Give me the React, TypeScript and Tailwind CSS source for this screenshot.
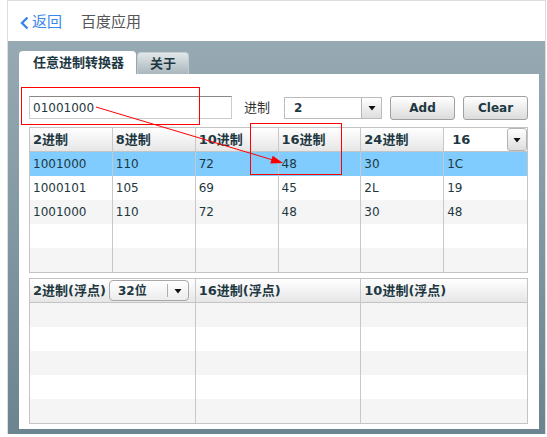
import React from "react"

const FONT = "font-[family-name:'DejaVu_Sans','Noto_Sans_CJK_SC',sans-serif]"

const rows: string[][] = [
  ["1001000", "110", "72", "48", "30", "1C"],
  ["1000101", "105", "69", "45", "2L", "19"],
  ["1001000", "110", "72", "48", "30", "48"],
  ["", "", "", "", "", ""],
  ["", "", "", "", "", ""],
]

const headers = ["2进制", "8进制", "10进制", "16进制", "24进制"]

function Caret() {
  return (
    <svg width="8" height="6" viewBox="0 0 8 6">
      <polygon points="0.5,1 7.5,1 4,5.5" fill="#111" />
    </svg>
  )
}

function DropButton({ className = "" }: { className?: string }) {
  return (
    <div
      className={`w-[20px] flex items-center justify-center border-l border-[#b4b4b4] bg-gradient-to-b from-white to-[#dedede] ${className}`}
    >
      <Caret />
    </div>
  )
}

export default function App() {
  return (
    <div className={`relative w-[547px] h-[437px] bg-white text-[#1e3842] ${FONT}`}>
      <div className="ml-[7px] w-[539px] h-[434px] border-l border-t border-r border-[#dddddd] flex flex-col">
        {/* Top bar */}
        <div className="h-[40px] shrink-0 flex items-center pl-[12px] pt-[3px] gap-[19px]">
          <div className="flex items-center text-[#3a86e8] text-[15px]">
            <svg width="9" height="14" viewBox="0 0 9 14" className="mr-[3px]">
              <polyline points="7.5,1.5 2,7 7.5,12.5" fill="none" stroke="#3a86e8" strokeWidth="2.4" />
            </svg>
            <span>返回</span>
          </div>
          <span className="text-[15px] text-[#555]">百度应用</span>
        </div>

        {/* Grey area */}
        <div className="flex-1 flex flex-col pl-[11px] pr-[6px] pt-[10px] pb-[5px] bg-gradient-to-b from-[#97aab3] to-[#6b848f]">
          {/* Tabs */}
          <div className="h-[23px] flex items-end gap-[1px]">
            <div className="h-[23px] w-[117px] bg-white rounded-t-[4px] flex items-center pl-[14px] text-[13px] font-bold">
              任意进制转换器
            </div>
            <div className="h-[22px] w-[52px] rounded-t-[4px] border border-b-0 border-[#c3ccd0] bg-gradient-to-b from-[#e2e8ea] to-[#a9b6bc] flex items-center pl-[12px] text-[13px] font-bold">
              关于
            </div>
          </div>

          {/* Panel */}
          <div className="flex-1 bg-white pl-[10px] pt-[22px]">
            {/* Input row */}
            <div className="flex items-center h-[23px]">
              <div className="w-[203px] h-[23px] border border-[#cccccc] border-t-[#888] flex items-center pl-[3px] text-[12px]">
                01001000
              </div>
              <span className="ml-[12px] text-[13px] text-[#333]">进制</span>
              <div className="ml-[14px] w-[98px] h-[22px] border border-[#bcbcbc] flex">
                <div className="flex-1 flex items-center pl-[9px] text-[12px] font-bold">2</div>
                <DropButton />
              </div>
              <button className="ml-[8px] w-[65px] h-[24px] rounded-[3px] border border-[#a0a0a0] bg-gradient-to-b from-white to-[#dcdcdc] text-[12px] font-bold">
                Add
              </button>
              <button className="ml-[8px] w-[65px] h-[24px] rounded-[3px] border border-[#a0a0a0] bg-gradient-to-b from-white to-[#dcdcdc] text-[12px] font-bold">
                Clear
              </button>
            </div>

            {/* Integer table */}
            <div className="mt-[8px] w-[499px] border border-[#c4c4c4] text-[12px]">
              <div className="grid grid-cols-6 h-[24px] border-b border-[#c4c4c4] bg-gradient-to-b from-white to-[#e6e6e6] font-bold text-[13px]">
                {headers.map((h) => (
                  <div key={h} className="border-r border-[#c8c8c8] flex items-center pl-[3px]">
                    {h}
                  </div>
                ))}
                <div className="flex bg-white">
                  <div className="flex-1 flex items-center pl-[8px]">16</div>
                  <DropButton className="rounded-[3px] border border-[#a8a8a8]" />
                </div>
              </div>
              {rows.map((r, i) => (
                <div
                  key={i}
                  className={`grid grid-cols-6 h-[24px] ${i === 0 ? "bg-[#80ccff]" : i % 2 === 0 ? "bg-[#f5f5f5]" : "bg-white"}`}
                >
                  {r.map((c, j) => (
                    <div key={j} className={`flex items-center pl-[3px] ${j < 5 ? "border-r border-[#c8c8c8]" : ""}`}>
                      {c}
                    </div>
                  ))}
                </div>
              ))}
            </div>

            {/* Float table */}
            <div className="mt-[5px] w-[499px] border border-[#c4c4c4] text-[13px]">
              <div className="grid grid-cols-3 h-[24px] border-b border-[#c4c4c4] bg-gradient-to-b from-white to-[#e6e6e6] font-bold">
                <div className="border-r border-[#c8c8c8] flex items-center pl-[3px]">
                  <span>2进制(浮点)</span>
                  <div className="ml-[3px] w-[80px] h-[21px] rounded-[4px] border border-[#a8a8a8] bg-gradient-to-b from-white to-[#ececec] flex">
                    <div className="flex-1 flex items-center pl-[8px] text-[12px]">32位</div>
                    <div className="my-[3px] w-px bg-[#b0b0b0]" />
                    <div className="w-[20px] flex items-center justify-center">
                      <Caret />
                    </div>
                  </div>
                </div>
                <div className="border-r border-[#c8c8c8] flex items-center pl-[3px]">16进制(浮点)</div>
                <div className="flex items-center pl-[3px]">10进制(浮点)</div>
              </div>
              {[0, 1, 2, 3, 4].map((i) => (
                <div key={i} className={`grid grid-cols-3 h-[24px] ${i % 2 === 0 ? "bg-[#f5f5f5]" : "bg-white"}`}>
                  <div className="border-r border-[#c8c8c8]" />
                  <div className="border-r border-[#c8c8c8]" />
                  <div />
                </div>
              ))}
            </div>
          </div>
        </div>
      </div>

      {/* Red annotations */}
      <svg className="absolute left-0 top-0 pointer-events-none" width="547" height="437">
        <rect x="21.5" y="87.5" width="178" height="37" fill="none" stroke="#ff0000" strokeWidth="1" shapeRendering="crispEdges" />
        <rect x="250.5" y="123.5" width="91" height="51" fill="none" stroke="#ff0000" strokeWidth="1" shapeRendering="crispEdges" />
        <line x1="96" y1="107" x2="273" y2="160" stroke="#ff0000" strokeWidth="1" />
        <polygon points="283,163 270.3,163.4 272.7,155.7" fill="#ff0000" />
      </svg>
    </div>
  )
}
